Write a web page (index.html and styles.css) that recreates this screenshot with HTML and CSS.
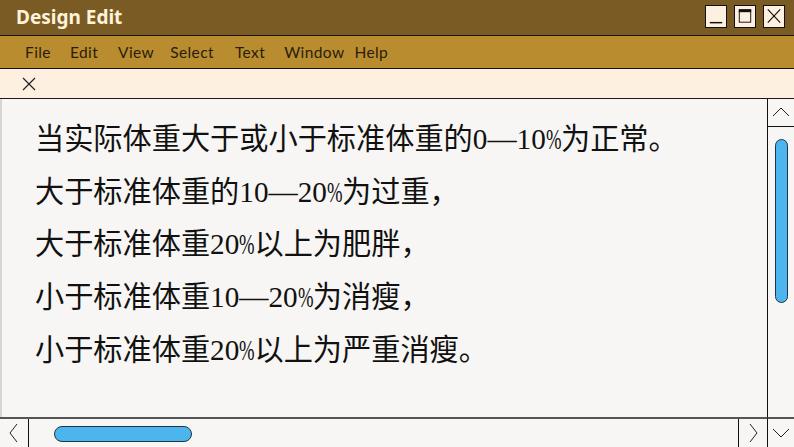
FILE: index.html
```html
<!DOCTYPE html>
<html lang="zh">
<head>
<meta charset="utf-8">
<title>Design Edit</title>
<link rel="stylesheet" href="styles.css">
</head>
<body>
<div class="window">
  <header class="titlebar">
    <div class="title">Design Edit</div>
    <div class="controls">
      <div class="ctl"><svg width="21" height="22" viewBox="0 0 21 22"><line x1="4" y1="18" x2="17" y2="18" stroke="#111" stroke-width="1.5"/></svg></div>
      <div class="ctl"><svg width="21" height="22" viewBox="0 0 21 22"><rect x="4.5" y="4.5" width="12" height="13" fill="none" stroke="#111" stroke-width="1"/><rect x="4" y="4" width="13" height="3" fill="#111"/></svg></div>
      <div class="ctl"><svg width="21" height="22" viewBox="0 0 21 22"><path d="M4 4 L17 18 M17 4 L4 18" stroke="#111" stroke-width="1.2" fill="none"/></svg></div>
    </div>
  </header>
  <nav class="menubar">
    <span class="mi">File</span>
    <span class="mi">Edit</span>
    <span class="mi">View</span>
    <span class="mi">Select</span>
    <span class="mi">Text</span>
    <span class="mi">Window</span>
    <span class="mi">Help</span>
  </nav>
  <div class="tabbar">
    <svg class="tabx" width="14" height="14" viewBox="0 0 14 14"><path d="M1 1 L13 13 M13 1 L1 13" stroke="#222" stroke-width="1.2" fill="none"/></svg>
  </div>
  <div class="main">
    <div class="content">
      <p>当实际体重大于或小于标准体重的0—10<span class="pct">%</span>为正常。</p>
      <p>大于标准体重的10—20<span class="pct">%</span>为过重，</p>
      <p>大于标准体重20<span class="pct">%</span>以上为肥胖，</p>
      <p>小于标准体重10—20<span class="pct">%</span>为消瘦，</p>
      <p>小于标准体重20<span class="pct">%</span>以上为严重消瘦。</p>
    </div>
    <div class="vscroll">
      <div class="vbtn"><svg width="26" height="26" viewBox="0 0 26 26"><polyline points="5,17 13,9 21,17" fill="none" stroke="#222" stroke-width="1"/></svg></div>
      <div class="vthumb"></div>
    </div>
    <div class="hscroll">
      <div class="hbtn left"><svg width="28" height="28" viewBox="0 0 28 28"><polyline points="17,5 10,14 17,23" fill="none" stroke="#222" stroke-width="1"/></svg></div>
      <div class="htrack"><div class="hthumb"></div></div>
      <div class="hbtn right"><svg width="28" height="28" viewBox="0 0 28 28"><polyline points="11,5 18,14 11,23" fill="none" stroke="#222" stroke-width="1"/></svg></div>
    </div>
    <div class="corner"><svg width="26" height="28" viewBox="0 0 26 28"><polyline points="5,10 13,18 21,10" fill="none" stroke="#222" stroke-width="1"/></svg></div>
  </div>
</div>
</body>
</html>
```
FILE: styles.css
```css
* { box-sizing: border-box; }
html, body { margin: 0; padding: 0; }
body { width: 794px; height: 447px; overflow: hidden; background: #7a5b24; }
.window {
  width: 794px; height: 447px;
  display: flex; flex-direction: column;
  border-radius: 6px 6px 0 0;
  overflow: hidden;
}
.titlebar {
  height: 36px; flex: none;
  background: #7a5b24;
  border-bottom: 1px solid #1c1408;
  display: flex; align-items: center; justify-content: space-between;
  padding: 0 9px 0 16px;
}
.title {
  font-family: "Noto Sans", sans-serif;
  font-weight: 700; font-size: 19px;
  color: #fff3d9;
  margin-top: -1px;
}
.controls { display: flex; gap: 7px; margin-top: -3px; }
.ctl {
  width: 22px; height: 23px;
  background: #fdf0e0;
  border: 1px solid #111;
  display: flex; align-items: center; justify-content: center;
}
.ctl svg { display: block; }
.menubar {
  height: 33px; flex: none;
  background: #b98d2f;
  border-bottom: 1px solid #1c1408;
  display: flex; align-items: center;
  padding-left: 25px;
  font-family: "Lato", sans-serif;
  font-size: 15.5px;
  color: #2a1c0a;
}
.mi { margin-right: 19px; letter-spacing: 0.4px; }
.mi:nth-child(2) { margin-right: 20px; }
.mi:nth-child(3) { margin-right: 16px; }
.mi:nth-child(4) { margin-right: 21px; }
.mi:nth-child(6) { margin-right: 10px; }
.tabbar {
  height: 30px; flex: none;
  background: #fdf0e1;
  border-bottom: 1px solid #1a1a1a;
  display: flex; align-items: center;
  padding-left: 22px;
}
.tabx { display: block; }
.main {
  flex: 1;
  display: grid;
  grid-template-columns: 1fr 27px;
  grid-template-rows: 1fr 30px;
  background: #f7f6f4;
}
.content {
  border-left: 2px solid #d9d6d1;
  padding: 14px 0 0 33px;
  font-family: "Liberation Serif", "Noto Sans CJK SC", serif;
  font-size: 29.2px;
  line-height: 52.7px;
  color: #111;
  overflow: hidden;
}
.content p { margin: 0; white-space: nowrap; }
.pct {
  display: inline-block;
  width: 0.52em;
  transform: scaleX(0.64);
  transform-origin: left center;
}
.vscroll {
  border-left: 1px solid #111;
  display: flex; flex-direction: column; align-items: flex-start;
}
.vbtn { width: 26px; height: 28px; border-bottom: 1px solid #111; flex: none; }
.vbtn svg, .hbtn svg, .corner svg { display: block; }
.vthumb {
  margin: 12px 0 0 7px;
  width: 13px; height: 164px;
  background: #4db5ee;
  border: 1px solid #1f3544;
  border-radius: 7px;
}
.hscroll {
  border-top: 2px solid #555;
  display: flex;
}
.hbtn { width: 29px; flex: none; }
.hbtn.left { border-right: 1px solid #111; }
.hbtn.right { border-left: 1px solid #111; }
.htrack { flex: 1; padding: 7px 0 0 25px; }
.hthumb {
  width: 138px; height: 16px;
  background: #4db5ee;
  border: 1px solid #1f3544;
  border-radius: 8px;
}
.corner {
  border-top: 2px solid #555;
  border-left: 1px solid #111;
}
```
